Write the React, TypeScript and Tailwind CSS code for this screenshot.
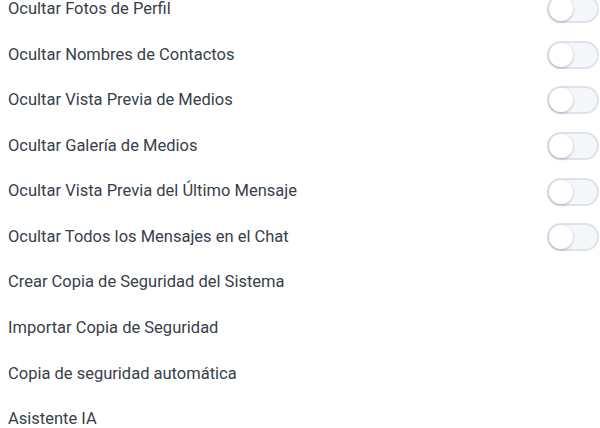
import React from 'react';

type SettingRow = {
    label: string;
    toggle: boolean;
};

const rows: SettingRow[] = [
    { label: 'Ocultar Fotos de Perfil', toggle: true },
    { label: 'Ocultar Nombres de Contactos', toggle: true },
    { label: 'Ocultar Vista Previa de Medios', toggle: true },
    { label: 'Ocultar Galería de Medios', toggle: true },
    { label: 'Ocultar Vista Previa del Último Mensaje', toggle: true },
    { label: 'Ocultar Todos los Mensajes en el Chat', toggle: true },
    { label: 'Crear Copia de Seguridad del Sistema', toggle: false },
    { label: 'Importar Copia de Seguridad', toggle: false },
    { label: 'Copia de seguridad automática', toggle: false },
    { label: 'Asistente IA', toggle: false },
];

function Toggle() {
    return (
        <div className="relative h-[28px] w-[52px] shrink-0 rounded-full border-2 border-[#dde3ee] bg-[#f6f7fb]">
            <div className="absolute left-[0px] top-[0px] h-[24px] w-[24px] rounded-full bg-white shadow-[0_1px_3px_rgba(0,0,0,0.25)]" />
        </div>
    );
}

export default function App() {
    return (
        <div className="h-[428px] w-[600px] overflow-hidden bg-white font-['Roboto',sans-serif]">
            <div className="-mt-[13.5px] flex flex-col">
                {rows.map((row, index) => (
                    <div key={index} className="flex h-[45.6px] items-center justify-between pl-[8px] pr-[1px]">
                        <span className="text-[16.5px] text-[#37404b]">{row.label}</span>
                        {row.toggle && <Toggle />}
                    </div>
                ))}
            </div>
        </div>
    );
}
